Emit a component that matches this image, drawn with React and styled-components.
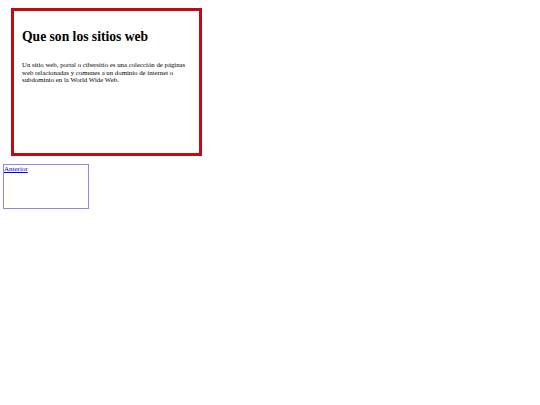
import React from "react";
import styled, { createGlobalStyle } from "styled-components";

const GlobalStyle = createGlobalStyle`
  body {
    margin: 0;
    background: #fff;
    font-family: "Liberation Serif", "Times New Roman", serif;
  }
`;

const Page = styled.div`
  padding: 8px 0 0 3px;
`;

const Card = styled.section`
  box-sizing: border-box;
  width: 191px;
  height: 148px;
  margin-left: 8px;
  padding: 17px 8px 8px;
  border: 3px solid #c20a12;
`;

const Title = styled.h2`
  margin: 0 0 15px;
  font-size: 13.6px;
  font-weight: bold;
  line-height: 18px;
  color: #000;
`;

const Text = styled.p`
  margin: 0;
  font-size: 6.8px;
  line-height: 7.6px;
  color: #000;
`;

const Nav = styled.nav`
  box-sizing: border-box;
  width: 86px;
  height: 45px;
  margin-top: 8px;
  border: 1px solid #9484f0;
`;

const Link = styled.a`
  display: block;
  font-size: 7px;
  line-height: 8px;
  color: #0000ee;
  text-decoration: underline;
`;

export default function App() {
  return (
    <>
      <GlobalStyle />
      <Page>
        <Card>
          <Title>Que son los sitios web</Title>
          <Text>
            Un sitio web, portal o cibersitio es una colección de páginas web
            relacionadas y comunes a un dominio de internet o subdominio en la
            World Wide Web.
          </Text>
        </Card>
        <Nav>
          <Link href="#">Anterior</Link>
        </Nav>
      </Page>
    </>
  );
}
